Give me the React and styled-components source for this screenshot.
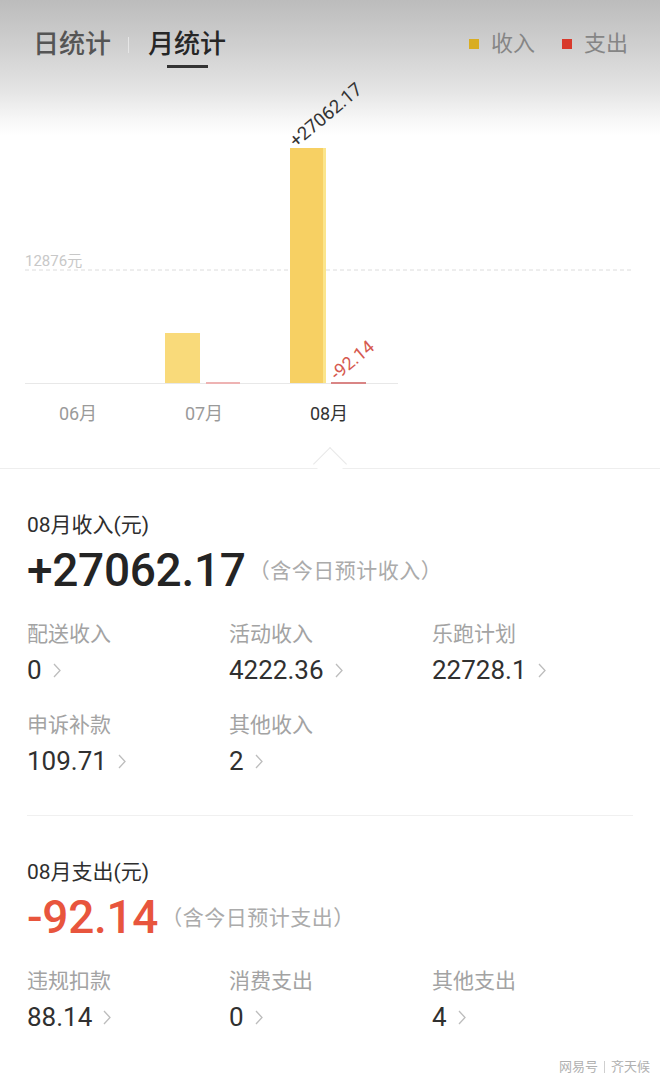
import styled, { createGlobalStyle } from "styled-components";

const GlobalStyle = createGlobalStyle`
  html, body {
    margin: 0;
    padding: 0;
    background: #fff;
  }
  body {
    font-family: Roboto, "Noto Sans CJK SC", sans-serif;
    color: #333;
  }
`;

const Page = styled.div`
  width: 660px;
  height: 1082px;
  overflow: hidden;
  background: #fff;
  display: flex;
  flex-direction: column;
`;

const Top = styled.div`
  background: linear-gradient(
    180deg,
    #bcbcbc 0px,
    #cfcfcf 45px,
    #e4e4e4 90px,
    #f6f6f6 118px,
    #ffffff 136px
  );
`;

const Header = styled.div`
  height: 80px;
  box-sizing: border-box;
  padding: 29px 32px 0 33px;
  display: flex;
  justify-content: space-between;
  align-items: flex-start;
`;

const Tabs = styled.div`
  display: flex;
  align-items: flex-start;
`;

const Tab = styled.div`
  display: flex;
  flex-direction: column;
  align-items: center;
  font-size: 26px;
  line-height: 30px;
  font-weight: 500;
  color: ${(p) => (p.active ? "#262626" : "#555")};
  &::after {
    content: "";
    width: 41px;
    height: 3px;
    margin-top: 6px;
    background: ${(p) => (p.active ? "#333" : "transparent")};
  }
`;

const TabSep = styled.div`
  width: 1px;
  height: 16px;
  margin: 8px 19px 0 17px;
  background: #e6e6e6;
`;

const Legend = styled.div`
  display: flex;
  align-items: center;
  gap: 27px;
  height: 30px;
`;

const LegendItem = styled.div`
  display: flex;
  align-items: center;
  gap: 12px;
  font-size: 22px;
  line-height: 30px;
  color: #858585;
  &::before {
    content: "";
    width: 10px;
    height: 10px;
    background: ${(p) => p.color};
  }
`;

const Chart = styled.svg`
  display: block;
  width: 660px;
  height: 388px;
  overflow: visible;
  font-family: Roboto, "Noto Sans CJK SC", sans-serif;
`;

const Divider = styled.div`
  position: relative;
  height: 1px;
  background: #eeeeee;
  &::before {
    content: "";
    position: absolute;
    left: 318px;
    top: -16px;
    width: 23px;
    height: 23px;
    background: #fff;
    border-top: 1px solid #e8e8e8;
    border-left: 1px solid #e8e8e8;
    transform: rotate(45deg);
  }
`;

const Section = styled.div`
  margin: 0 27px;
  padding: 42px 0 ${(p) => (p.last ? "0" : "38px")};
  border-bottom: ${(p) => (p.last ? "none" : "1px solid #f0f0f0")};
`;

const Title = styled.div`
  font-size: 21px;
  line-height: 28px;
  color: #2e2e2e;
`;

const AmountRow = styled.div`
  display: flex;
  align-items: center;
  margin-top: 6px;
  height: 50px;
`;

const Amount = styled.div`
  font-size: 46px;
  line-height: 50px;
  font-weight: 500;
  letter-spacing: -0.3px;
  color: ${(p) => p.color};
`;

const Note = styled.div`
  margin-left: 3px;
  margin-top: 2px;
  font-size: 21px;
  line-height: 28px;
  letter-spacing: 0.5px;
  color: #ababab;
`;

const Grid = styled.div`
  display: grid;
  grid-template-columns: 202px 203px 1fr;
  row-gap: 25px;
  margin-top: 25px;
`;

const Item = styled.div`
  display: flex;
  flex-direction: column;
`;

const Label = styled.div`
  font-size: 21px;
  line-height: 28px;
  color: #a3a3a3;
`;

const Value = styled.div`
  display: flex;
  align-items: center;
  gap: 11px;
  margin-top: 6px;
  font-size: 26px;
  line-height: 32px;
  color: #303030;
`;

const Footer = styled.div`
  display: flex;
  justify-content: flex-end;
  align-items: center;
  gap: 6px;
  padding: 26px 10px 0 0;
  font-size: 13px;
  line-height: 16px;
  color: #b0b0b0;
`;

const FooterSep = styled.span`
  width: 1px;
  height: 12px;
  background: #cfcfcf;
`;

function Chevron() {
  return (
    <svg width="8" height="15" viewBox="0 0 8 15">
      <path d="M1 1l6 6.5L1 14" fill="none" stroke="#bdbdbd" strokeWidth="1.3" />
    </svg>
  );
}

const income = [
  { label: "配送收入", value: "0" },
  { label: "活动收入", value: "4222.36" },
  { label: "乐跑计划", value: "22728.1" },
  { label: "申诉补款", value: "109.71" },
  { label: "其他收入", value: "2" },
];

const expense = [
  { label: "违规扣款", value: "88.14" },
  { label: "消费支出", value: "0" },
  { label: "其他支出", value: "4" },
];

function Stats({ items }) {
  return (
    <Grid>
      {items.map((it) => (
        <Item key={it.label}>
          <Label>{it.label}</Label>
          <Value>
            {it.value}
            <Chevron />
          </Value>
        </Item>
      ))}
    </Grid>
  );
}

export default function App() {
  return (
    <Page>
      <GlobalStyle />
      <Top>
        <Header>
          <Tabs>
            <Tab>日统计</Tab>
            <TabSep />
            <Tab active>月统计</Tab>
          </Tabs>
          <Legend>
            <LegendItem color="#d9ad22">收入</LegendItem>
            <LegendItem color="#d8392b">支出</LegendItem>
          </Legend>
        </Header>
        <Chart viewBox="0 0 660 388">
          <line x1="25" y1="190" x2="632" y2="190" stroke="#dcdcdc" strokeDasharray="4 3" />
          <text x="25" y="186" fontSize="15" fill="#c8c8c8">12876元</text>
          <line x1="25" y1="303.5" x2="398" y2="303.5" stroke="#e8e8e8" />
          <rect x="165" y="253" width="35" height="50" fill="#f9da7a" />
          <rect x="206" y="302" width="34" height="2" fill="#eeb3b3" />
          <rect x="290" y="68" width="35" height="235" fill="#f7d063" />
          <rect x="323" y="68" width="3" height="235" fill="#fbe58c" />
          <rect x="331" y="302" width="35" height="2" fill="#d98585" />
          <text x="296" y="68" fontSize="18.5" fill="#333" transform="rotate(-40 296 68)">
            +27062.17
          </text>
          <text x="337" y="301" fontSize="18" fill="#d65a50" transform="rotate(-40 337 301)">
            -92.14
          </text>
          <text x="78" y="340" fontSize="18" fill="#9a9a9a" textAnchor="middle">06月</text>
          <text x="204" y="340" fontSize="18" fill="#9a9a9a" textAnchor="middle">07月</text>
          <text x="329" y="340" fontSize="18" fill="#333" textAnchor="middle">08月</text>
        </Chart>
      </Top>
      <Divider />
      <Section>
        <Title>08月收入(元)</Title>
        <AmountRow>
          <Amount color="#242424">+27062.17</Amount>
          <Note>（含今日预计收入）</Note>
        </AmountRow>
        <Stats items={income} />
      </Section>
      <Section last>
        <Title>08月支出(元)</Title>
        <AmountRow>
          <Amount color="#e8553d">-92.14</Amount>
          <Note>（含今日预计支出）</Note>
        </AmountRow>
        <Stats items={expense} />
      </Section>
      <Footer>
        网易号<FooterSep />齐天候
      </Footer>
    </Page>
  );
}
